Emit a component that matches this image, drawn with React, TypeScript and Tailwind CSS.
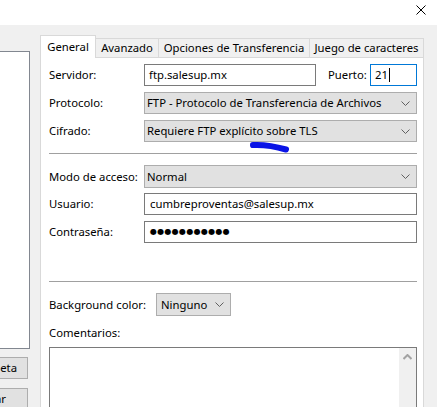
import React from "react"

function Chevron() {
  return (
    <svg width="9" height="5" viewBox="0 0 9 5" className="shrink-0">
      <polyline points="0.5,0.5 4.5,4.5 8.5,0.5" fill="none" stroke="#606060" strokeWidth="1" />
    </svg>
  )
}

function Select({ value, className }: { value: string; className: string }) {
  return (
    <div className={`flex items-center justify-between bg-[#e1e1e1] border border-[#adadad] pl-[2px] pr-[6px] ${className}`}>
      <span className="whitespace-nowrap">{value}</span>
      <Chevron />
    </div>
  )
}

export default function App() {
  const tabs = [
    { name: "General", w: "w-[56px] border-l", active: true },
    { name: "Avanzado", w: "w-[63px]", active: false },
    { name: "Opciones de Transferencia", w: "w-[151px]", active: false },
    { name: "Juego de caracteres", w: "w-[114px]", active: false },
  ]

  return (
    <div className="w-[437px] h-[407px] bg-[#f0f0f0] flex flex-col overflow-hidden font-['Noto_Sans',sans-serif] text-[11.3px] leading-none text-black">
      {/* Title bar */}
      <div className="h-[25px] bg-white flex justify-end shrink-0 pr-[11px] pt-[5px]">
        <svg width="10" height="10" viewBox="0 0 10 10">
          <path d="M0.5 0.5 L9.5 9.5 M9.5 0.5 L0.5 9.5" stroke="#000" strokeWidth="1" />
        </svg>
      </div>

      <div className="flex flex-1 min-h-0">
        {/* Left: site list + buttons (cut off by the window edge) */}
        <div className="w-[40px] shrink-0 overflow-hidden flex flex-col">
          <div className="mt-[26px] w-[30px] h-[298px] shrink-0 bg-white border border-l-0 border-[#828790]" />
          <button className="mt-[8px] ml-[-74px] w-[102px] h-[22px] shrink-0 bg-[#e1e1e1] border border-[#adadad] flex items-center justify-end pr-[10px] whitespace-nowrap">
            Nueva carpeta
          </button>
          <button className="mt-[9px] ml-[-74px] w-[102px] h-[22px] shrink-0 bg-[#e1e1e1] border border-[#adadad] flex items-center justify-end pr-[21px] whitespace-nowrap">
            Renombrar
          </button>
        </div>

        {/* Tab control */}
        <div className="w-[384px] shrink-0 mt-[10px] flex flex-col">
          <div className="h-[22px] flex items-end shrink-0">
            {tabs.map((t) =>
              t.active ? (
                <div
                  key={t.name}
                  className={`${t.w} h-[23px] -mb-px relative z-10 bg-white border-t border-r border-[#d9d9d9] flex items-center justify-center whitespace-nowrap pb-[1px]`}
                >
                  {t.name}
                </div>
              ) : (
                <div
                  key={t.name}
                  className={`${t.w} h-[19px] bg-[#f0f0f0] border-t border-r border-[#d9d9d9] flex items-center justify-center whitespace-nowrap`}
                >
                  {t.name}
                </div>
              ),
            )}
          </div>

          <div className="flex-1 bg-white border border-b-0 border-[#d9d9d9] pl-[8px] pr-[5px] pt-[6px] flex flex-col">
            {/* Servidor / Puerto */}
            <div className="flex items-center h-[22px]">
              <span className="w-[95px] shrink-0">Servidor:</span>
              <div className="w-[172px] h-[22px] border border-[#7a7a7a] flex items-center pl-[4px]">ftp.salesup.mx</div>
              <span className="ml-[12px] w-[42px] shrink-0">Puerto:</span>
              <div className="w-[47px] h-[22px] border border-[#0078d7] flex items-center pl-[4px]">
                21<span className="w-px h-[14px] bg-black ml-px" />
              </div>
            </div>

            <div className="flex items-center h-[22px] mt-[6px]">
              <span className="w-[95px] shrink-0">Protocolo:</span>
              <Select value="FTP - Protocolo de Transferencia de Archivos" className="w-[273px] h-[22px]" />
            </div>

            <div className="relative flex items-center h-[22px] mt-[6px]">
              <span className="w-[95px] shrink-0">Cifrado:</span>
              <Select value="Requiere FTP explícito sobre TLS" className="w-[273px] h-[22px]" />
              <svg width="42" height="13" viewBox="0 0 42 13" className="absolute left-[200px] top-[21px]">
                <path d="M4 4 C 14 3.5, 25 5, 37 8.5" fill="none" stroke="#0a14e6" strokeWidth="6" strokeLinecap="round" />
              </svg>
            </div>

            <div className="mt-[11px] w-[368px] h-px bg-[#a0a0a0] shrink-0" />

            <div className="flex items-center h-[23px] mt-[11px]">
              <span className="w-[95px] shrink-0">Modo de acceso:</span>
              <Select value="Normal" className="w-[273px] h-[23px]" />
            </div>

            <div className="flex items-center h-[22px] mt-[5px]">
              <span className="w-[95px] shrink-0">Usuario:</span>
              <div className="w-[273px] h-[22px] border border-[#7a7a7a] flex items-center pl-[5px]">cumbreproventas@salesup.mx</div>
            </div>

            <div className="flex items-center h-[22px] mt-[6px]">
              <span className="w-[95px] shrink-0">Contraseña:</span>
              <div className="w-[273px] h-[22px] border border-[#7a7a7a] flex items-center pl-[5px] text-[8px] tracking-[0.3px] font-['DejaVu_Sans',sans-serif]">
                ●●●●●●●●●●●
              </div>
            </div>

            <div className="mt-[38px] w-[368px] h-px bg-[#a0a0a0] shrink-0" />

            <div className="flex items-center h-[23px] mt-[11px]">
              <span className="w-[107px] shrink-0 whitespace-nowrap">Background color:</span>
              <Select value="Ninguno" className="w-[75px] h-[23px] pl-[4px]" />
            </div>

            <div className="mt-[9px] h-[16px] flex items-center">Comentarios:</div>

            <div className="mt-[6px] w-[368px] flex-1 border border-b-0 border-[#7a7a7a] flex justify-end">
              <div className="w-[17px] bg-[#f0f0f0] flex justify-center pt-[6px]">
                <svg width="9" height="6" viewBox="0 0 9 6">
                  <polyline points="0.5,5 4.5,1 8.5,5" fill="none" stroke="#a3a3a3" strokeWidth="2" />
                </svg>
              </div>
            </div>
          </div>
        </div>
      </div>
    </div>
  )
}
